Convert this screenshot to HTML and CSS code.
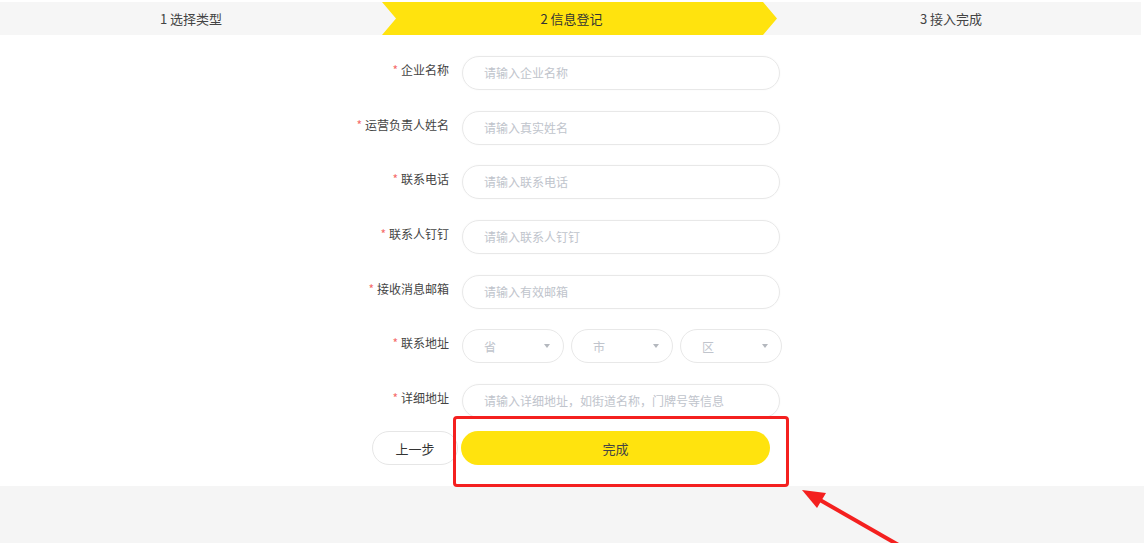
FILE: index.html
```html
<!DOCTYPE html>
<html>
	<head>
		<meta charset="UTF-8">
		<title>信息登记</title>
		<link rel="stylesheet" href="styles.css">
	</head>
	<body>
		<div class="steps">
			<div class="step">1 选择类型</div>
			<div class="step step-on">2 信息登记</div>
			<div class="step step-last">3 接入完成</div>
		</div>
		<div class="main">
			<div class="form">
				<label class="label"><i>*</i>企业名称</label>
				<div class="input">请输入企业名称</div>
				<label class="label"><i>*</i>运营负责人姓名</label>
				<div class="input">请输入真实姓名</div>
				<label class="label"><i>*</i>联系电话</label>
				<div class="input">请输入联系电话</div>
				<label class="label"><i>*</i>联系人钉钉</label>
				<div class="input">请输入联系人钉钉</div>
				<label class="label"><i>*</i>接收消息邮箱</label>
				<div class="input">请输入有效邮箱</div>
				<label class="label"><i>*</i>联系地址</label>
				<div class="selects">
					<div class="select">省<b></b></div>
					<div class="select">市<b></b></div>
					<div class="select">区<b></b></div>
				</div>
				<label class="label"><i>*</i>详细地址</label>
				<div class="input">请输入详细地址，如街道名称，门牌号等信息</div>
			</div>
			<div class="btns">
				<div class="btn btn-prev">上一步</div>
				<div class="btn btn-done">完成</div>
			</div>
		</div>
		<div class="footer"></div>

		<!-- 标注 -->
		<div class="mark"></div>
		<svg class="mark-arrow" width="354" height="63" viewBox="0 0 354 63">
			<line x1="30" y1="20" x2="112" y2="67" stroke="#f4201f" stroke-width="4"/>
			<polygon points="12,10 27,28 36,13" fill="#f4201f"/>
		</svg>
	</body>
</html>
```

FILE: styles.css
```css
*{
	padding: 0;
	margin: 0;
	box-sizing: border-box;
}
body,html{
	width: 100%;
	height: 100%;
	overflow: hidden;
	background: #fff;
	font-family: "Noto Sans CJK SC", "Noto Sans", sans-serif;
	color: #333;
}
body{
	position: relative;
}
.steps{
	margin-top: 2px;
	width: 1141px;
	height: 33px;
	background: #f6f6f6;
	display: grid;
	grid-template-columns: 382px 395px 1fr;
	font-size: 13px;
}
.step{
	display: flex;
	align-items: center;
	justify-content: center;
	color: #444;
}
.step-on{
	background: #ffe30e;
	clip-path: polygon(0 0, calc(100% - 14px) 0, 100% 50%, calc(100% - 14px) 100%, 0 100%, 14px 50%);
	padding-right: 16px;
	color: #333;
}
.step-last{
	padding-right: 16px;
}
.main{
	height: 451px;
	padding-top: 21px;
}
.form{
	margin-left: 339px;
	display: grid;
	grid-template-columns: 110px 318px;
	column-gap: 13px;
	row-gap: 20.7px;
	align-items: center;
}
.label{
	text-align: right;
	font-size: 12px;
	color: #444;
	line-height: 34px;
	margin-top: -6px;
}
.label i{
	font-style: normal;
	color: #f56c6c;
	margin-right: 3px;
}
.input{
	height: 34px;
	border: 1px solid #e8e8e8;
	border-radius: 17px;
	padding-left: 21px;
	font-size: 12px;
	line-height: 32px;
	color: #c0c4cc;
	box-shadow: 0 0 2px rgba(0,0,0,0.04);
}
.selects{
	display: flex;
	gap: 7px;
	width: 320px;
}
.select{
	flex: 1;
	height: 34px;
	border: 1px solid #e8e8e8;
	border-radius: 17px;
	padding: 0 13px 0 21px;
	font-size: 12px;
	color: #c0c4cc;
	display: flex;
	align-items: center;
	justify-content: space-between;
}
.select b{
	width: 0;
	height: 0;
	border-left: 3px solid transparent;
	border-right: 3px solid transparent;
	border-top: 4px solid #b4b8be;
}
.btns{
	display: flex;
	gap: 3px;
	margin-left: 372px;
	margin-top: 13px;
}
.btn{
	height: 34px;
	border-radius: 17px;
	font-size: 13px;
	display: flex;
	align-items: center;
	justify-content: center;
}
.btn-prev{
	width: 86px;
	border: 1px solid #e6e6e6;
	color: #333;
}
.btn-done{
	width: 309px;
	background: #ffe30e;
	color: #444;
}
.footer{
	height: 57px;
	background: #f5f5f5;
}
.mark{
	position: absolute;
	left: 453px;
	top: 416px;
	width: 336px;
	height: 71px;
	border: 3px solid #f4201f;
	border-radius: 4px;
}
.mark-arrow{
	position: absolute;
	left: 790px;
	top: 480px;
}
```
